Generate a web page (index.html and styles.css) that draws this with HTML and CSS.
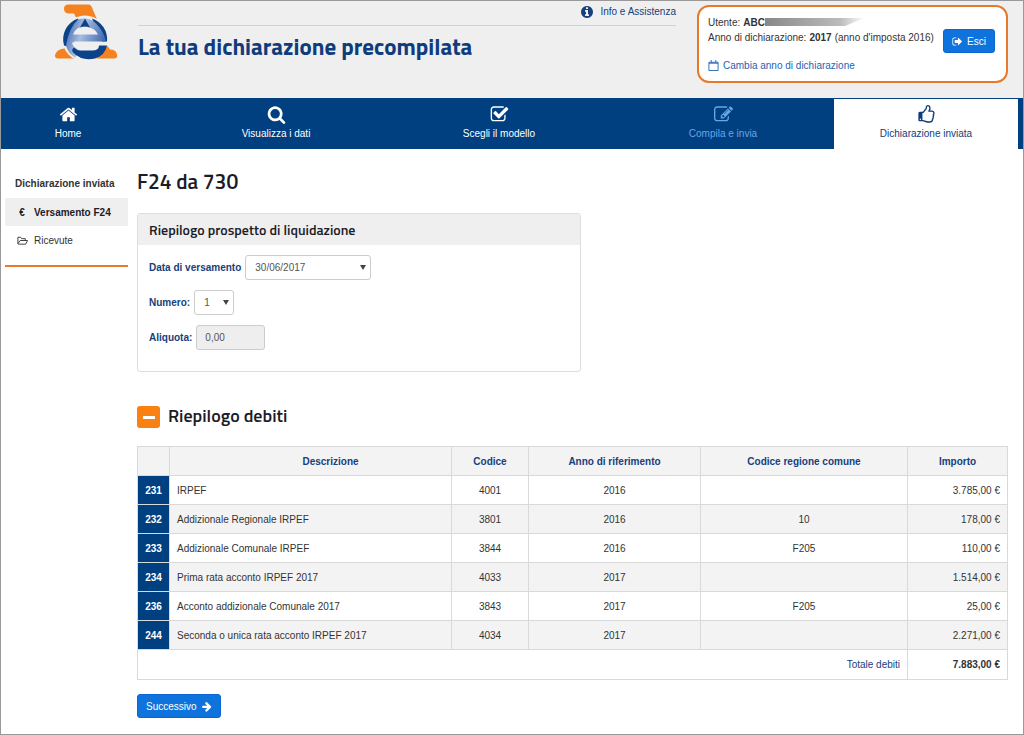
FILE: index.html
```html
<!DOCTYPE html>
<html lang="it">
<head>
<meta charset="utf-8">
<meta name="viewport" content="width=device-width, initial-scale=1">
<title>La tua dichiarazione precompilata</title>
<link rel="stylesheet" href="styles.css">
</head>
<body>
<div class="page">
  <header class="header">
    <div class="brand">
      <svg class="logo" viewBox="0 0 64 56" role="img" aria-label="Agenzia delle Entrate">
        <defs>
          <linearGradient id="ring" x1="0" y1="0.2" x2="1" y2="0.5">
            <stop offset="0" stop-color="#3f6bb2"/>
            <stop offset="0.4" stop-color="#a9bde0"/>
            <stop offset="1" stop-color="#3b66ae"/>
          </linearGradient>
        </defs>
        <path fill="#f5821f" d="M15 0h19q3 0 4 3l5 12H23l-3-6h-5q-5 0-5-5 0-4 5-4z"/>
        <path fill="#f5821f" d="M10 39v5q-8 1-9 7 0 3 3 3h57q3-1 2-4-1-5-7-5l-5-7H43v10H18z"/>
        <circle cx="31" cy="34" r="23" fill="#efefef"/>
        <path fill="#0c4288" d="M24 14A22 22 0 0 0 10 41l7 2 8-20zM38 14a22 22 0 0 1 15 23h-5l-7-15z"/>
        <path fill="url(#ring)" d="M12 41Q15 23 24 15q11-3 18 4 8 8 10 18H20q0 5 6 10l-5 6Q14 49 12 41z"/>
        <path fill="#efefef" d="M19 30q3-8 12-8 10 1 13 8z"/>
        <path fill="#efefef" d="M18 38h36v3H45l-1 5-18-1q-7-1-8-7z"/>
        <path fill="#0c4288" d="M26 23l5-9 5 9q-5-2-10 0z"/>
        <path fill="#0c4288" d="M20 43q-3 2-1 5 9 9 22 6 10-3 12-13h-8q0 5-7 5H26q-3 0-6-3z"/>
      </svg>
    </div>
    <div class="heading">
      <div class="help">
        <a class="help-link" href="#info">
          <svg class="icon" viewBox="0 0 1792 1792" aria-hidden="true"><path d="M1152 1376v-160q0-14-9-23t-23-9h-96v-512q0-14-9-23t-23-9h-320q-14 0-23 9t-9 23v160q0 14 9 23t23 9h96v320h-96q-14 0-23 9t-9 23v160q0 14 9 23t23 9h448q14 0 23-9t9-23zm-128-896v-160q0-14-9-23t-23-9h-192q-14 0-23 9t-9 23v160q0 14 9 23t23 9h192q14 0 23-9t9-23zm640 416q0 209-103 385.5t-279.5 279.5-385.5 103-385.5-103-279.5-279.5-103-385.5 103-385.5 279.5-279.5 385.5-103 385.5 103 279.5 279.5 103 385.5z"/></svg>
          Info e Assistenza
        </a>
      </div>
      <div class="title">La tua dichiarazione precompilata</div>
    </div>
    <div class="user">
      <div class="user-info">
        <div class="user-line">Utente: <b>ABC</b><span class="redacted"></span></div>
        <div class="user-line">Anno di dichiarazione: <b>2017</b> (anno d'imposta 2016)</div>
        <a class="change-year" href="#anno">
          <svg class="icon-small" viewBox="0 0 12 12" aria-hidden="true"><path fill="none" stroke="currentColor" d="M1 2.5h10v9H1zM1 3.500h10M3.500 0v2.500M8.500 0v2.500"/></svg>
          Cambia anno di dichiarazione
        </a>
      </div>
      <button class="button" type="button">
        <svg class="icon-small" viewBox="0 0 1792 1792" aria-hidden="true"><path d="M704 1440q0 4 1 20t.5 26.500-3 23.500-10 19.500-20.500 6.500h-320q-119 0-203.500-84.500t-84.500-203.500v-704q0-119 84.500-203.500t203.500-84.500h320q13 0 22.500 9.500t9.500 22.500q0 4 1 20t.5 26.500-3 23.500-10 19.500-20.500 6.500h-320q-66 0-113 47t-47 113v704q0 66 47 113t113 47h312l11.500 1 11.500 3 8 5.500 7 9 2 13.500zm928-544q0 26-19 45l-544 544q-19 19-45 19t-45-19-19-45v-288h-448q-26 0-45-19t-19-45v-384q0-26 19-45t45-19h448v-288q0-26 19-45t45-19 45 19l544 544q19 19 19 45z"/></svg>
        Esci
      </button>
    </div>
  </header>

  <nav class="nav">
    <a class="tab tab-home" href="#home">
      <svg class="tab-icon" viewBox="0 0 1792 1792" aria-hidden="true"><path d="M1472 992v480q0 26-19 45t-45 19h-384v-384h-256v384h-384q-26 0-45-19t-19-45v-480q0-1 .5-3t.5-3l575-474 575 474q1 2 1 6zm223-69l-62 74q-8 9-21 11h-3q-13 0-21-7l-692-577-692 577q-12 8-24 7-13-2-21-11l-62-74q-8-10-7-23.500t11-21.500l719-599q32-26 76-26t76 26l244 204v-195q0-14 9-23t23-9h192q14 0 23 9t9 23v408l219 182q10 8 11 21.500t-7 23.500z"/></svg>
      Home
    </a>
    <a class="tab" href="#dati">
      <svg class="tab-icon" viewBox="0 0 1792 1792" aria-hidden="true"><path d="M1216 832q0-185-131.500-316.500t-316.500-131.500-316.500 131.500-131.500 316.500 131.500 316.500 316.500 131.500 316.500-131.500 131.500-316.500zm512 832q0 52-38 90t-90 38q-54 0-90-38l-343-342q-179 124-399 124-143 0-273.500-55.500t-225-150-150-225-55.500-273.500 55.500-273.500 150-225 225-150 273.500-55.500 273.500 55.500 225 150 150 225 55.500 273.500q0 220-124 399l343 343q37 37 37 90z"/></svg>
      Visualizza i dati
    </a>
    <a class="tab" href="#modello">
      <svg class="tab-icon" viewBox="0 0 1792 1792" aria-hidden="true"><path d="M1472 930v318q0 119-84.500 203.500t-203.500 84.500h-832q-119 0-203.500-84.500t-84.500-203.500v-832q0-119 84.500-203.500t203.500-84.500h832q63 0 117 25 15 7 18 23 3 17-9 29l-49 49q-10 10-23 10-3 0-9-2-23-6-45-6h-832q-66 0-113 47t-47 113v832q0 66 47 113t113 47h832q66 0 113-47t47-113v-254q0-13 9-22l64-64q10-10 23-10 6 0 12 3 20 8 20 29zm231-489l-814 814q-24 24-57 24t-57-24l-430-430q-24-24-24-57t24-57l110-110q24-24 57-24t57 24l263 263 647-647q24-24 57-24t57 24l110 110q24 24 24 57t-24 57z"/></svg>
      Scegli il modello
    </a>
    <a class="tab tab-muted" href="#compila">
      <svg class="tab-icon" viewBox="0 0 1792 1792" aria-hidden="true"><path d="M888 1184l116-116-152-152-116 116v56h96v96h56zm440-720q-16-16-33 1l-350 350q-17 17-1 33t33-1l350-350q17-17 1-33zm80 594v190q0 119-84.500 203.500t-203.500 84.500h-832q-119 0-203.500-84.500t-84.500-203.500v-832q0-119 84.500-203.500t203.500-84.500h832q63 0 117 25 15 7 18 23 3 17-9 29l-49 49q-14 14-32 8-23-6-45-6h-832q-66 0-113 47t-47 113v832q0 66 47 113t113 47h832q66 0 113-47t47-113v-126q0-13 9-22l64-64q15-15 35-7t20 29zm-96-738l288 288-672 672h-288v-288zm444 132l-92 92-288-288 92-92q28-28 68-28t68 28l152 152q28 28 28 68t-28 68z"/></svg>
      Compila e invia
    </a>
    <a class="tab tab-active" href="#inviata" aria-current="page">
      <svg class="tab-icon" viewBox="0 0 1792 1792" aria-hidden="true"><path d="M384 1344q0-26-19-45t-45-19q-27 0-45.500 19t-18.500 45q0 27 18.500 45.500t45.500 18.500q26 0 45-18.500t19-45.500zm1152-576q0-51-39-89.500t-89-38.500h-352q0-58 48-159.500t48-160.500q0-98-32-145t-128-47q-26 26-38 85t-30.500 125.500-59.500 109.500q-22 23-77 91-4 5-23 30t-31.500 41-34.500 42.500-40 44-38.500 35.500-40 27-35.500 9h-32v640h32q13 0 31.500 3t33 6.500 38 11 35 11.500 35.500 12.500 29 10.500q211 73 342 73h121q192 0 192-167 0-26-5-56 30-16 47.500-52.500t17.500-73.500-18-69q53-50 53-119 0-25-10-55.500t-25-47.500q32-1 53.500-47t21.500-81zm128-1q0 89-49 163 9 33 9 69 0 77-38 144 3 21 3 43 0 101-60 178 1 139-85 219.500t-227 80.500h-129q-96 0-189.500-22.500t-216.500-65.500q-116-40-138-40h-288q-53 0-90.500-37.500t-37.500-90.500v-640q0-53 37.500-90.500t90.500-37.500h274q36-24 137-155 58-75 107-128 24-25 35.500-85.500t30.500-126.500 62-108q39-37 90-37 84 0 151 32.500t102 101.500 35 186q0 93-48 192h176q104 0 180 76t76 179z"/></svg>
      Dichiarazione inviata
    </a>
  </nav>

  <div class="body">
    <aside class="sidebar">
      <div class="side-title">Dichiarazione inviata</div>
      <a class="side-link side-current" href="#f24"><span class="side-icon">€</span>Versamento F24</a>
      <a class="side-link" href="#ricevute"><span class="side-icon"><svg class="icon-small" viewBox="0 0 12 12" aria-hidden="true"><path fill="none" stroke="currentColor" stroke-linejoin="round" d="M1 9.500v-7h3l1 1.500h4v2M1 9.500L3.500 6h8L9.500 10h-8z"/></svg></span>Ricevute</a>
    </aside>

    <main class="content">
      <h1 class="page-title">F24 da 730</h1>

      <section class="panel">
        <h2 class="panel-title">Riepilogo prospetto di liquidazione</h2>
        <form class="form">
          <div class="field">
            <label for="data">Data di versamento</label>
            <span class="select select-date"><select class="control" id="data"><option>30/06/2017</option></select></span>
          </div>
          <div class="field">
            <label for="numero">Numero:</label>
            <span class="select select-number"><select class="control" id="numero"><option>1</option></select></span>
          </div>
          <div class="field">
            <label for="aliquota">Aliquota:</label>
            <input class="control control-rate" id="aliquota" type="text" value="0,00" readonly>
          </div>
        </form>
      </section>

      <div class="section-head">
        <button class="toggle" type="button" aria-label="Comprimi"><span class="minus"></span></button>
        <h2 class="section-title">Riepilogo debiti</h2>
      </div>

      <table class="table">
        <colgroup><col class="col-num"><col><col class="col-code"><col class="col-year"><col class="col-region"><col class="col-amount"></colgroup>
        <thead>
          <tr><th></th><th class="head-text">Descrizione</th><th>Codice</th><th>Anno di riferimento</th><th>Codice regione comune</th><th>Importo</th></tr>
        </thead>
        <tbody>
          <tr><th scope="row">231</th><td class="text">IRPEF</td><td>4001</td><td>2016</td><td></td><td class="amount">3.785,00 €</td></tr>
          <tr><th scope="row">232</th><td class="text">Addizionale Regionale IRPEF</td><td>3801</td><td>2016</td><td>10</td><td class="amount">178,00 €</td></tr>
          <tr><th scope="row">233</th><td class="text">Addizionale Comunale IRPEF</td><td>3844</td><td>2016</td><td>F205</td><td class="amount">110,00 €</td></tr>
          <tr><th scope="row">234</th><td class="text">Prima rata acconto IRPEF 2017</td><td>4033</td><td>2017</td><td></td><td class="amount">1.514,00 €</td></tr>
          <tr><th scope="row">236</th><td class="text">Acconto addizionale Comunale 2017</td><td>3843</td><td>2017</td><td>F205</td><td class="amount">25,00 €</td></tr>
          <tr><th scope="row">244</th><td class="text">Seconda o unica rata acconto IRPEF 2017</td><td>4034</td><td>2017</td><td></td><td class="amount">2.271,00 €</td></tr>
        </tbody>
        <tfoot>
          <tr><td class="total-label" colspan="5">Totale debiti</td><td class="amount total">7.883,00 €</td></tr>
        </tfoot>
      </table>

      <button class="button" type="button">
        Successivo
        <svg class="icon-small" viewBox="0 0 1792 1792" aria-hidden="true"><path d="M1664 960q0 54-37 91l-651 651q-39 37-91 37-51 0-90-37l-75-75q-38-38-38-91t38-91l293-293h-704q-52 0-84.500-37.500t-32.500-90.500v-128q0-53 32.500-90.500t84.500-37.500h704l-293-294q-38-36-38-90t38-90l75-75q38-38 90-38 53 0 91 38l651 651q37 35 37 90z"/></svg>
      </button>
    </main>
  </div>
</div>
</body>
</html>
```
FILE: styles.css
```css
* {
  box-sizing: border-box;
}

body {
  margin: 0;
  font-family: "Liberation Sans", Arial, sans-serif;
  font-size: 10px;
  line-height: 15px;
  color: #333;
  background: #fff;
}

a {
  color: inherit;
  text-decoration: none;
}

h1,
h2 {
  margin: 0;
  font-family: "Titillium Web", "Noto Sans", sans-serif;
  font-weight: 600;
  color: #1c1c28;
}

svg {
  fill: currentColor;
  flex: none;
}

.page {
  min-height: 100vh;
  border: 1px solid #999;
}

.icon {
  width: 14px;
  height: 14px;
}

.icon-small {
  width: 11px;
  height: 11px;
}

/* Header */

.header {
  display: grid;
  grid-template-columns: 137px minmax(0, 1fr) 311px;
  align-items: start;
  height: 97px;
  padding-right: 15px;
  background: #efefef;
}

.brand {
  padding: 3px 0 0 53px;
}

.logo {
  display: block;
  width: 64px;
  height: 57px;
}

.heading {
  padding-right: 21px;
}

.help {
  display: flex;
  justify-content: flex-end;
  height: 25px;
  padding-top: 3px;
  border-bottom: 1px solid #d2d2d2;
  color: #17407c;
}

.help-link {
  display: flex;
  align-items: center;
  gap: 6px;
  height: 15px;
}

.title {
  padding-top: 6px;
  font-family: "Titillium Web", "Noto Sans", sans-serif;
  font-size: 23px;
  font-weight: 700;
  line-height: 30px;
  color: #0f3c7c;
}

.user {
  display: flex;
  align-items: center;
  justify-content: space-between;
  min-height: 78px;
  margin-top: 4px;
  padding: 0 11px 0 9px;
  border: 2px solid #e8792b;
  border-radius: 12px;
  background: #fff;
}

.user-line {
  display: flex;
  gap: 3px;
  white-space: nowrap;
}

.redacted {
  width: 100px;
  height: 8px;
  margin: 3px 0 0 -3px;
  background: linear-gradient(90deg, #888, #aaa 50%, #bbb 75%, #fff);
  clip-path: polygon(0 0, 100% 0, 80% 100%, 0 100%);
}

.change-year {
  display: flex;
  align-items: center;
  gap: 4px;
  margin-top: 13px;
  color: #2463b4;
}

.button {
  display: inline-flex;
  align-items: center;
  justify-content: center;
  gap: 4px;
  height: 24px;
  padding: 0 8px;
  border: 1px solid #0b66cf;
  border-radius: 3px;
  background: #0f73dd;
  font: inherit;
  color: #fff;
}

.user .button {
  margin-bottom: 6px;
}

/* Navigation */

.nav {
  display: grid;
  grid-template-columns:
    minmax(0, 165fr) minmax(0, 220fr) minmax(0, 226fr)
    minmax(0, 222fr) minmax(0, 184fr);
  padding: 1px 5px 0 0;
  background: #004080;
}

.tab {
  display: flex;
  flex-direction: column;
  align-items: center;
  gap: 2px;
  height: 50px;
  padding-top: 6px;
  color: #fff;
}

.tab-home {
  padding-right: 31px;
}

.tab-icon {
  width: 19px;
  height: 19px;
}

.tab-muted {
  color: #6aa5e6;
}

.tab-active {
  background: #fff;
  color: #0f3c7c;
}

/* Body */

.body {
  display: grid;
  grid-template-columns: 123px minmax(0, 1fr);
  gap: 9px;
  align-items: start;
  padding: 20px 15px 15px 4px;
}

.sidebar {
  padding-top: 7px;
  padding-bottom: 11px;
  border-bottom: 2px solid #e8792b;
}

.side-title {
  padding: 0 0 7px 10px;
  font-weight: 700;
  white-space: nowrap;
}

.side-link {
  display: flex;
  align-items: center;
  height: 28px;
}

.side-current {
  font-weight: 700;
  color: #1c1c28;
  background: #efefef;
}

.side-icon {
  display: flex;
  justify-content: center;
  width: 29px;
  padding-left: 5px;
}

.page-title {
  font-size: 21px;
  line-height: 24px;
}

.panel {
  width: 51%;
  margin-top: 20px;
  border: 1px solid #ddd;
  border-radius: 3px;
}

.panel-title {
  padding: 5px 11px 4px;
  background: #efefef;
  font-size: 14px;
  line-height: 22px;
}

.form {
  display: grid;
  gap: 10px;
  padding: 10px 11px 21px;
}

.field {
  display: flex;
  align-items: center;
  gap: 4px;
  font-weight: 700;
  color: #17407c;
}

.control {
  width: 100%;
  height: 25px;
  padding: 0 9px;
  border: 1px solid #ccc;
  border-radius: 3px;
  background: #fff;
  font: inherit;
  font-weight: 400;
  color: #555;
  appearance: none;
}

.control-rate {
  width: 69px;
  padding: 0 8px;
  background: #eee;
}

.select {
  position: relative;
}

.select::after {
  content: "";
  position: absolute;
  top: 10px;
  right: 5px;
  border: 3px solid transparent;
  border-top: 5px solid #444;
  border-bottom: 0;
  pointer-events: none;
}

.select-date {
  width: 126px;
}

.select-number {
  width: 40px;
}

.section-head {
  display: flex;
  align-items: center;
  gap: 8px;
  margin: 31px 0 17px;
}

.toggle {
  display: grid;
  place-items: center;
  width: 23px;
  height: 22px;
  margin-top: 2px;
  padding: 0;
  border: 0;
  border-radius: 3px;
  background: #f98012;
}

.minus {
  width: 12px;
  height: 3px;
  background: #fff;
}

.section-title {
  font-size: 18px;
  line-height: 26px;
}

/* Table */

.table {
  width: 100%;
  table-layout: fixed;
  border-collapse: collapse;
  margin-bottom: 14px;
}

.table th,
.table td {
  height: 29px;
  padding: 0 7px;
  border: 1px solid #d9d9d9;
  text-align: center;
}

.table thead th {
  background: #f3f3f3;
  color: #17407c;
}

.table .head-text {
  padding-left: 47px;
}

.table tbody th {
  background: #004080;
  color: #fff;
}

.table tbody tr:nth-child(even) td {
  background: #f3f3f3;
}

.table .text {
  text-align: left;
}

.table .amount,
.table .total-label {
  text-align: right;
}

.table .total-label {
  height: 30px;
  color: #17407c;
}

.table .total {
  font-weight: 700;
}

.col-num {
  width: 32px;
}

.col-code {
  width: 77px;
}

.col-year {
  width: 172px;
}

.col-region {
  width: 207px;
}

.col-amount {
  width: 100px;
}
```
